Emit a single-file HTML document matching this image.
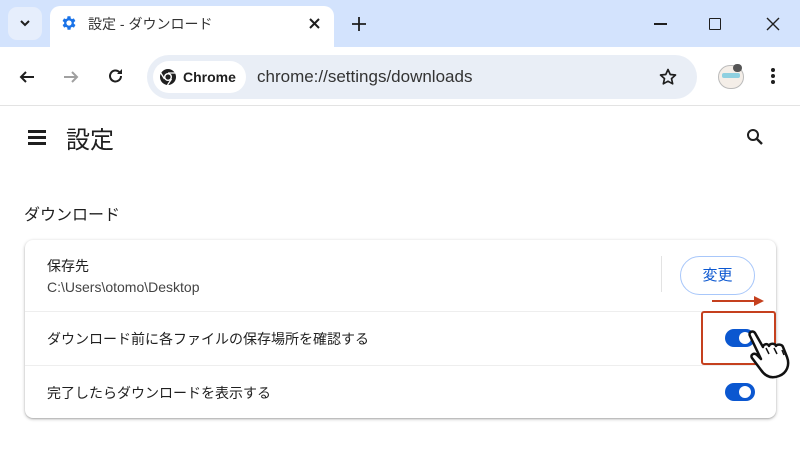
<!DOCTYPE html>
<html><head><meta charset="utf-8"><style>
*{margin:0;padding:0;box-sizing:border-box}
body{width:800px;height:458px;overflow:hidden;background:#fff;font-family:"Liberation Sans","Noto Sans CJK JP",sans-serif;position:relative;color:#1f1f1f}
.a{position:absolute}
</style></head><body>
<div class="a" style="left:0;top:0;width:800px;height:47px;background:#d3e3fd"></div>
<div class="a" style="left:8px;top:7px;width:34px;height:33px;border-radius:9px;background:#e6eefc"></div>
<svg class="a" style="left:18px;top:16px" width="14" height="14"><path d="M3 5l4 4 4-4" stroke="#1f1f1f" stroke-width="2" fill="none"/></svg>
<div class="a" style="left:50px;top:6px;width:284px;height:42px;background:#fff;border-radius:10px 10px 0 0"></div>
<svg class="a" style="left:60px;top:14px" width="18" height="18" viewBox="0 0 24 24"><path fill="#1a73e8" d="M19.4 13a7.5 7.5 0 000-2l2.1-1.6-2-3.5-2.5 1a7 7 0 00-1.7-1L15 3h-4l-.4 2.9a7 7 0 00-1.7 1l-2.5-1-2 3.5L6.6 11a7.5 7.5 0 000 2l-2.1 1.6 2 3.5 2.5-1a7 7 0 001.7 1L11 21h4l.4-2.9a7 7 0 001.7-1l2.5 1 2-3.5zM13 15.5a3.5 3.5 0 110-7 3.5 3.5 0 010 7z" transform="translate(-1 0)"/></svg>
<div class="a" style="left:88px;top:14px;font-size:14px;color:#333">設定 - ダウンロード</div>
<svg class="a" style="left:309px;top:18px" width="11" height="11"><path d="M1 1l9 9M10 1L1 10" stroke="#1f1f1f" stroke-width="2"/></svg>
<svg class="a" style="left:352px;top:17px" width="14" height="14"><path d="M7 0v14M0 7h14" stroke="#1f1f1f" stroke-width="1.8"/></svg>
<div class="a" style="left:654px;top:23px;width:13px;height:1.5px;background:#1f1f1f"></div>
<div class="a" style="left:709px;top:18px;width:12px;height:12px;border:1.5px solid #1f1f1f;border-radius:1px"></div>
<svg class="a" style="left:766px;top:17px" width="14" height="14"><path d="M1 1l12 12M13 1L1 13" stroke="#1f1f1f" stroke-width="1.4"/></svg>
<div class="a" style="left:0;top:47px;width:800px;height:58px;background:#fff;border-radius:12px 12px 0 0"></div>
<div class="a" style="left:0;top:105px;width:800px;height:1px;background:#e3e3e3"></div>
<svg class="a" style="left:18px;top:68px" width="18" height="18"><path d="M16 9H3M8 4L3 9l5 5" stroke="#1f1f1f" stroke-width="2" fill="none"/></svg>
<svg class="a" style="left:62px;top:68px" width="18" height="18"><path d="M2 9h13M10 4l5 5-5 5" stroke="#a0a0a0" stroke-width="2" fill="none"/></svg>
<svg class="a" style="left:107px;top:67px" width="18" height="18"><path d="M14 9a5.5 5.5 0 11-1.6-3.9" stroke="#1f1f1f" stroke-width="2" fill="none"/><path d="M15 2v5h-5z" fill="#1f1f1f"/></svg>
<div class="a" style="left:147px;top:55px;width:550px;height:44px;background:#e9eef6;border-radius:22px"></div>
<div class="a" style="left:153px;top:61px;width:93px;height:32px;background:#fff;border-radius:16px"></div>
<svg class="a" style="left:159px;top:68px" width="18" height="18" viewBox="0 0 18 18"><circle cx="9" cy="9" r="8" fill="#1f1f1f"/><circle cx="9" cy="9" r="4" fill="#fff"/><circle cx="9" cy="9" r="2.6" fill="#1f1f1f"/><path d="M9 5h7.5M5.5 11L1.5 4.5M12.5 11L8.5 17" stroke="#fff" stroke-width="1.3"/></svg>
<div class="a" style="left:183px;top:69px;font-size:14px;font-weight:bold;color:#1f1f1f">Chrome</div>
<div class="a" style="left:257px;top:67px;font-size:17px;color:#333">chrome://settings/downloads</div>
<svg class="a" style="left:658px;top:67px" width="20" height="20" viewBox="0 0 24 24"><path d="M12 3l2.7 6 6.3.6-4.8 4.3 1.4 6.3L12 17l-5.6 3.2 1.4-6.3L3 9.6 9.3 9z" stroke="#1f1f1f" stroke-width="2" fill="none" stroke-linejoin="round"/></svg>
<div class="a" style="left:718px;top:65px;width:26px;height:24px;border-radius:12px;background:#f4eee8;border:1px solid #bbb"></div>
<div class="a" style="left:722px;top:73px;width:18px;height:5px;background:#8fd0e0;border-radius:2px"></div>
<div class="a" style="left:733px;top:64px;width:9px;height:8px;background:#555;border-radius:4px"></div>
<div class="a" style="left:771px;top:68px;width:4px;height:4px;border-radius:2px;background:#1f1f1f;box-shadow:0 6px 0 #1f1f1f,0 12px 0 #1f1f1f"></div>

<div class="a" style="left:28px;top:130px;width:18px;height:2.5px;background:#1f1f1f;box-shadow:0 6px 0 #1f1f1f,0 12px 0 #1f1f1f"></div>
<div class="a" style="left:66px;top:120px;font-size:24px;color:#1f1f1f">設定</div>
<svg class="a" style="left:746px;top:128px" width="18" height="18"><circle cx="7" cy="7" r="5" stroke="#1f1f1f" stroke-width="2" fill="none"/><path d="M11 11l5 5" stroke="#1f1f1f" stroke-width="2.4"/></svg>
<div class="a" style="left:24px;top:201px;font-size:16px">ダウンロード</div>

<div class="a" style="left:25px;top:240px;width:751px;height:178px;border-radius:8px;background:#fff;box-shadow:0 1px 3px rgba(0,0,0,.3),0 1px 1px rgba(0,0,0,.1)"></div>
<div class="a" style="left:47px;top:256px;font-size:14px">保存先</div>
<div class="a" style="left:47px;top:279px;font-size:14px;color:#444">C:\Users\otomo\Desktop</div>
<div class="a" style="left:661px;top:256px;width:1px;height:36px;background:#e3e3e3"></div>
<div class="a" style="left:680px;top:256px;width:75px;height:39px;border:1px solid #a8c7fa;border-radius:20px;color:#0b57d0;font-size:15px;text-align:center;line-height:37px">変更</div>
<div class="a" style="left:25px;top:311px;width:751px;height:1px;background:#eee"></div>
<div class="a" style="left:25px;top:365px;width:751px;height:1px;background:#eee"></div>
<div class="a" style="left:47px;top:329px;font-size:14px">ダウンロード前に各ファイルの保存場所を確認する</div>
<div class="a" style="left:47px;top:383px;font-size:14px">完了したらダウンロードを表示する</div>
<div class="a" style="left:725px;top:329px;width:30px;height:18px;border-radius:9px;background:#0b57d0"></div>
<div class="a" style="left:739px;top:332px;width:12px;height:12px;border-radius:6px;background:#fff"></div>
<div class="a" style="left:725px;top:383px;width:30px;height:18px;border-radius:9px;background:#0b57d0"></div>
<div class="a" style="left:739px;top:386px;width:12px;height:12px;border-radius:6px;background:#fff"></div>
<div class="a" style="left:701px;top:311px;width:75px;height:54px;border:2.5px solid #c5401e;border-radius:3px"></div>
<svg class="a" style="left:712px;top:295px" width="54" height="12"><path d="M0 6h44" stroke="#c5401e" stroke-width="2"/><path d="M42 1l10 5-10 5z" fill="#c5401e"/></svg>
<svg class="a" style="left:742px;top:328px" width="52" height="56" viewBox="0 0 52 56"><path d="M8 8c-2-4 3-6 5-3l8 14c0-3 5-4 6-1 1-3 6-3 7 0 1-2 6-2 7 1l4 10c3 8 0 16-8 19-8 3-14 0-18-6l-9-12c-2-3 2-6 5-3l4 4z" fill="#fff" stroke="#111" stroke-width="2.5" stroke-linejoin="round"/><path d="M24 20l3 6M32 20l3 6M40 22l2 5" stroke="#111" stroke-width="1.5"/></svg>
</body></html>
